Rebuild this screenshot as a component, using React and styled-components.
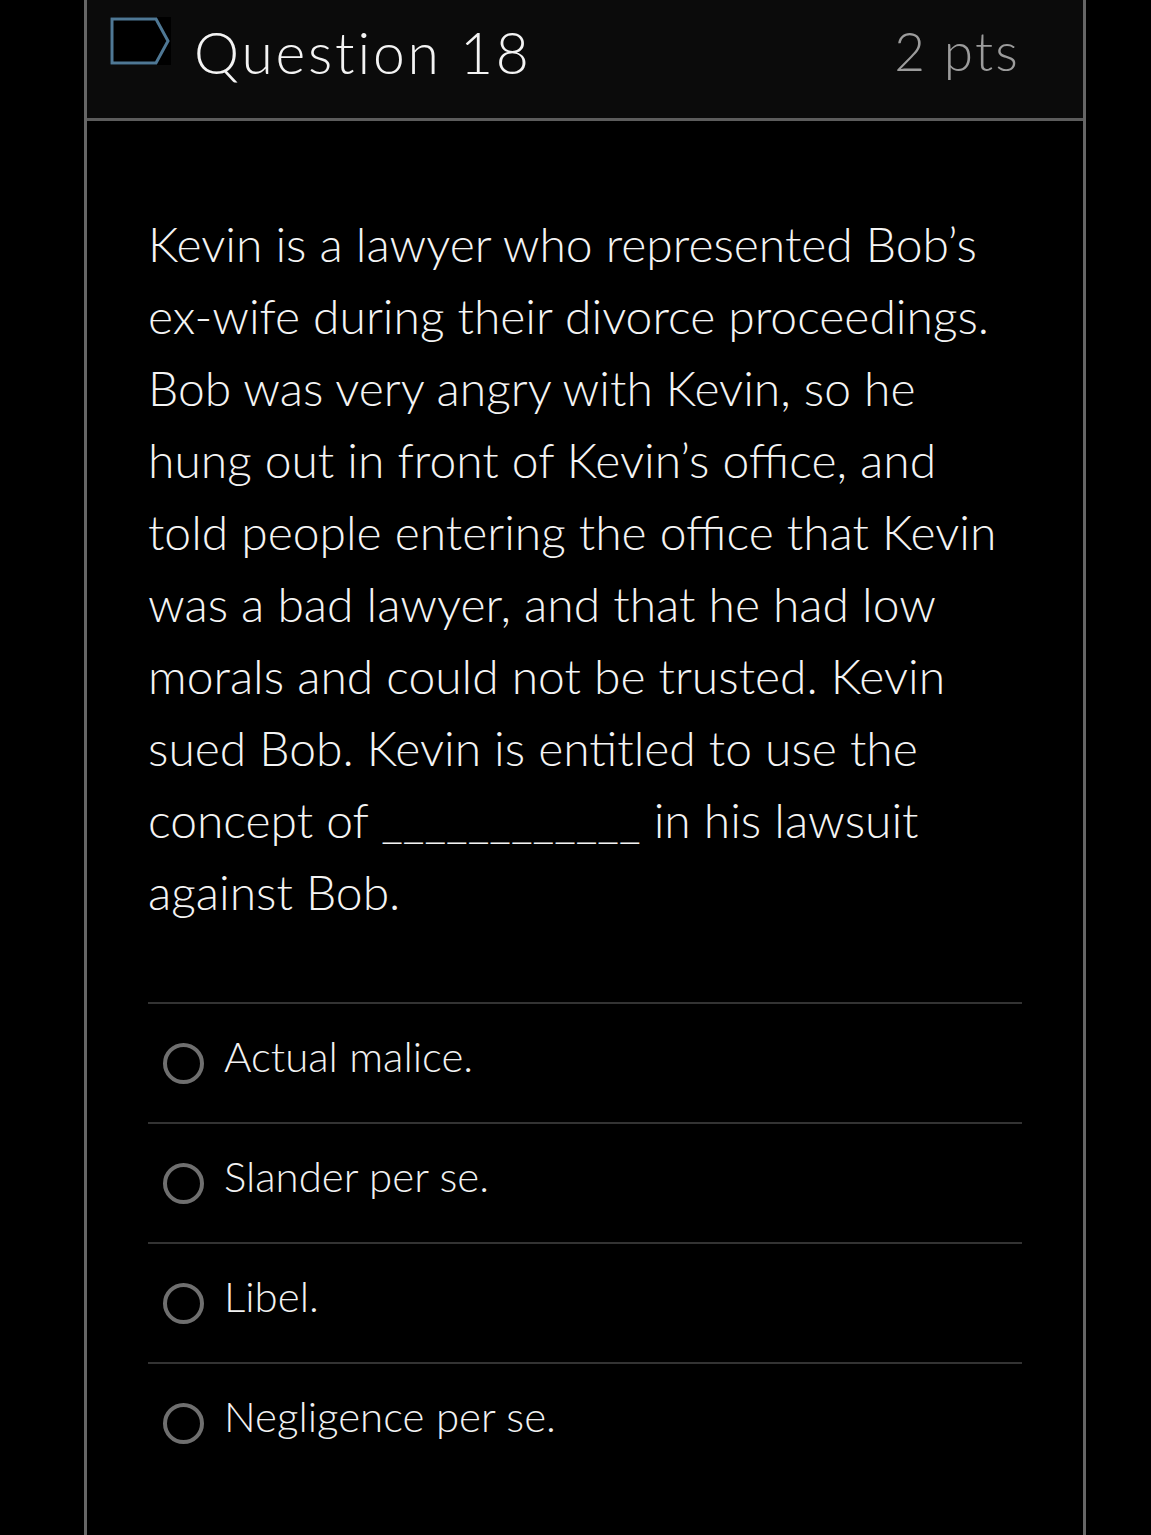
import React from "react";
import styled, { createGlobalStyle } from "styled-components";

const GlobalStyle = createGlobalStyle`
  html, body {
    margin: 0;
    padding: 0;
    background: #000;
  }
  body {
    font-family: Lato, "Open Sans", sans-serif;
    color: #f2f2f2;
  }
`;

const questionLines = [
  "Kevin is a lawyer who represented Bob’s",
  "ex-wife during their divorce proceedings.",
  "Bob was very angry with Kevin, so he",
  "hung out in front of Kevin’s office, and",
  "told people entering the office that Kevin",
  "was a bad lawyer, and that he had low",
  "morals and could not be trusted. Kevin",
  "sued Bob. Kevin is entitled to use the",
  "concept of ____________ in his lawsuit",
  "against Bob.",
];

const answers = [
  "Actual malice.",
  "Slander per se.",
  "Libel.",
  "Negligence per se.",
];

const FlagIcon = () => (
  <svg width="61" height="48" viewBox="0 0 61 48">
    <rect width="61" height="48" fill="#000" />
    <path
      d="M2 2 H46 L58 24 L46 46 H2 Z"
      fill="none"
      stroke="#4f7895"
      strokeWidth="3"
      strokeLinejoin="miter"
    />
  </svg>
);

const App = () => {
  return (
    <>
      <GlobalStyle />
      <StyledCard>
        <Header>
          <div className="title">
            <FlagIcon />
            <h2>Question 18</h2>
          </div>
          <Points>2 pts</Points>
        </Header>
        <Content>
          <QuestionText>
            {questionLines.map((line, i) => (
              <span key={i}>{line}</span>
            ))}
          </QuestionText>
          <Answers>
            {answers.map((answer) => (
              <AnswerRow key={answer}>
                <Radio />
                <AnswerLabel>{answer}</AnswerLabel>
              </AnswerRow>
            ))}
          </Answers>
        </Content>
      </StyledCard>
    </>
  );
};

export default App;

const lightFont = `"Lato Light", Lato, "Open Sans", sans-serif`;

const StyledCard = styled.div`
  margin-left: 84px;
  width: 996px;
  min-height: 1535px;
  border-left: 3px solid #666;
  border-right: 3px solid #666;
`;

const Header = styled.div`
  height: 118px;
  background: #0b0b0b;
  border-bottom: 3px solid #5c5c5c;
  display: flex;
  justify-content: space-between;
  align-items: flex-start;
  padding: 0 63px 0 23px;
  box-sizing: content-box;

  .title {
    display: flex;
    align-items: flex-start;
    gap: 23px;
  }

  svg {
    margin-top: 17px;
    flex-shrink: 0;
  }

  h2 {
    margin: 19px 0 0;
    font-family: ${lightFont};
    font-size: 57px;
    font-weight: 300;
    letter-spacing: 2.8px;
    line-height: 67px;
    color: #f4f4f4;
  }
`;

const Points = styled.div`
  margin-top: 20px;
  font-family: ${lightFont};
  font-size: 53px;
  font-weight: 300;
  letter-spacing: 2.2px;
  line-height: 62px;
  color: #9c9c9c;
`;

const Content = styled.div`
  padding: 87px 61px 0;
`;

const QuestionText = styled.p`
  margin: 0 0 74px;
  font-family: ${lightFont};
  font-size: 48px;
  font-weight: 300;
  line-height: 72px;
  color: #f4f4f4;

  span {
    display: block;
    white-space: nowrap;
  }
`;

const Answers = styled.div`
  display: flex;
  flex-direction: column;
`;

const AnswerRow = styled.div`
  box-sizing: border-box;
  height: 120px;
  border-top: 2px solid #333;
  display: flex;
  align-items: flex-start;
  gap: 20px;
  padding: 27px 15px 0;
`;

const Radio = styled.span`
  width: 33px;
  height: 33px;
  margin-top: 12px;
  border: 4px solid #6f6f6f;
  border-radius: 50%;
  flex-shrink: 0;
`;

const AnswerLabel = styled.span`
  font-family: ${lightFont};
  font-size: 42px;
  font-weight: 300;
  line-height: 50px;
  color: #f2f2f2;
`;
